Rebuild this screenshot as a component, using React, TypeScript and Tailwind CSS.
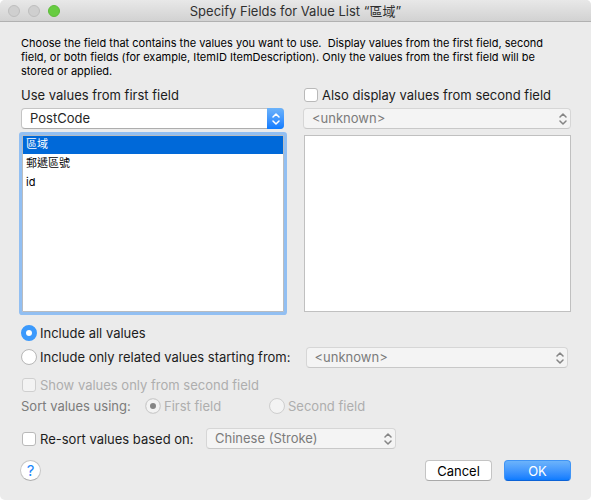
import { useState } from "react";
import clsx from "clsx";

const fieldNames = ["區域", "郵遞區號", "id"];

const controlBase = "m-0 shrink-0 appearance-none border bg-white border-[#b9b9b9] disabled:bg-[#f3f3f3] disabled:border-[#cfcfcf]";
const checkboxClass = clsx(controlBase, "mx-px size-[14px] rounded-[3px] checked:bg-[#3b99fc]");
const radioClass = clsx(
  controlBase,
  "size-4 rounded-full bg-clip-padding",
  "enabled:checked:border-[5px] enabled:checked:border-[#3b99fc]",
  "disabled:checked:bg-[#858585] disabled:checked:shadow-[inset_0_0_0_4px_#f3f3f3]"
);

function Arrows({ className }: { className?: string }) {
  return (
    <svg viewBox="0 0 8 12" className={clsx("h-3 w-2", className)} fill="none" stroke="currentColor" strokeWidth="1.5" strokeLinecap="round" strokeLinejoin="round">
      <path d="M1 4 4 1l3 3M1 8l3 3 3-3" />
    </svg>
  );
}

type PopUpProps = {
  label: string;
  options: string[];
  disabled?: boolean;
  className?: string;
};

function PopUp({ label, options, disabled, className }: PopUpProps) {
  return (
    <div className={clsx("relative h-[21px]", className)}>
      <select
        aria-label={label}
        disabled={disabled}
        className="block h-full w-full appearance-none rounded-[4px] border border-[#c4c4c4] border-b-[#adadad] bg-white pl-2 pr-6 text-[13px] leading-[19px] text-[#262626] outline-none disabled:border-[#d6d6d6] disabled:border-b-[#c8c8c8] disabled:bg-[#f4f4f4] disabled:text-[#7b7b7b] disabled:opacity-100"
      >
        {options.map((option) => (
          <option key={option}>{option}</option>
        ))}
      </select>
      <span
        className={clsx(
          "pointer-events-none absolute inset-y-0 right-0 flex w-[17px] items-center justify-center rounded-r-[4px]",
          disabled ? "text-[#858585]" : "bg-linear-to-b from-[#6cb3fa] to-[#0a7bff] text-white"
        )}
      >
        <Arrows />
      </span>
    </div>
  );
}

export default function App() {
  const [selected, setSelected] = useState("區域");
  const [include, setInclude] = useState("all");
  const [resort, setResort] = useState(false);

  return (
    <div className="min-h-screen bg-white font-[Inter,'Noto_Sans_CJK_TC',sans-serif] text-[13px] leading-4 text-[#1c1c1c]">
      <div className="flex min-h-screen flex-col overflow-hidden rounded-[5px] bg-[#ebebeb]">
        <header className="grid h-[22px] grid-cols-[60px_1fr_60px] items-center border-b border-[#b1b1b1] bg-linear-to-b from-[#e8e8e8] to-[#d2d2d2]">
          <div className="flex gap-2 pl-2">
            <button aria-label="Close" className="size-3 shrink-0 rounded-full border border-[#bdbdbd] bg-[#cfcfcf]" />
            <button aria-label="Minimize" className="size-3 shrink-0 rounded-full border border-[#bdbdbd] bg-[#cfcfcf]" />
            <button aria-label="Zoom" className="size-3 shrink-0 rounded-full border border-[#5cbb39] bg-[#67cc41]" />
          </div>
          <h1 className="text-center text-[#303030]">Specify Fields for Value List “區域”</h1>
        </header>

        <main className="flex flex-col pt-[14px] pr-5 pl-[21px]">
          <p className="pr-5 text-[11px] leading-[14px] text-black">
            Choose the field that contains the values you want to use.&nbsp; Display values from the first field, second
            field, or both fields (for example, ItemID ItemDescription). Only the values from the first field will be
            stored or applied.
          </p>

          <div className="mt-2 grid grid-cols-[263fr_268fr] gap-x-[19px]">
            <section>
              <h2 className="flex h-[18px] items-center">Use values from first field</h2>
              <PopUp label="First field table" options={["PostCode"]} className="mt-1" />
              <ul
                role="listbox"
                aria-label="First field"
                className="mt-[6px] ml-px flex h-[177px] flex-col gap-px rounded-[1px] border border-[#b9bcc0] bg-white text-[11px] text-black ring-3 ring-[#92bff2]"
              >
                {fieldNames.map((name) => (
                  <li
                    key={name}
                    role="option"
                    aria-selected={selected === name}
                    onClick={() => setSelected(name)}
                    className={clsx("flex h-[18px] items-center px-[3px] pb-[2px]", selected === name && "bg-[#0069d9] text-white")}
                  >
                    {name}
                  </li>
                ))}
              </ul>
            </section>

            <section>
              <label className="flex h-[18px] items-center gap-[3px]">
                <input type="checkbox" className={checkboxClass} />
                Also display values from second field
              </label>
              <PopUp label="Second field table" options={["<unknown>"]} disabled className="mt-1" />
              <ul role="listbox" aria-label="Second field" className="mt-[6px] ml-px h-[177px] border border-[#c0c0c0] bg-white" />
            </section>
          </div>

          <label className="mt-3 flex h-[18px] items-center gap-[3px] self-start">
            <input type="radio" name="include" className={radioClass} checked={include === "all"} onChange={() => setInclude("all")} />
            Include all values
          </label>
          <div className="mt-1 flex h-[21px] items-center gap-[15px] pr-[3px]">
            <label className="flex items-center gap-[3px] whitespace-nowrap">
              <input type="radio" name="include" className={radioClass} checked={include === "related"} onChange={() => setInclude("related")} />
              Include only related values starting from:
            </label>
            <PopUp label="Related table" options={["<unknown>"]} disabled className="mt-[2px] flex-1" />
          </div>
          <label className="mt-[9px] flex h-[18px] items-center gap-[3px] self-start text-[#aeaeae]">
            <input type="checkbox" disabled className={checkboxClass} />
            Show values only from second field
          </label>

          <fieldset className="mt-1 flex h-[18px] items-center text-[#aeaeae]">
            <span className="w-[124px] text-[#7b7b7b]">Sort values using:</span>
            <label className="flex w-[124px] items-center gap-[3px]">
              <input type="radio" name="sort" disabled defaultChecked className={radioClass} />
              First field
            </label>
            <label className="flex items-center gap-[3px]">
              <input type="radio" name="sort" disabled className={radioClass} />
              Second field
            </label>
          </fieldset>

          <div className="mt-3 flex h-[21px] items-center">
            <label className="flex w-[185px] items-center gap-[3px] whitespace-nowrap">
              <input type="checkbox" className={checkboxClass} checked={resort} onChange={() => setResort(!resort)} />
              Re-sort values based on:
            </label>
            <PopUp label="Sort language" options={["Chinese (Stroke)"]} disabled={!resort} className="w-[190px]" />
          </div>

          <footer className="mt-[11px] mb-[18px] flex items-center gap-3">
            <button
              aria-label="Help"
              className="-ml-px mr-auto flex size-[21px] items-center justify-center rounded-full border border-[#c6c6c6] border-b-[#adadad] bg-white text-[15px] text-[#1a86fb]"
            >
              ?
            </button>
            <button className="h-[21px] w-[67px] rounded-[4px] border border-[#c4c4c4] border-b-[#a9a9a9] bg-white text-black">Cancel</button>
            <button className="h-[21px] w-[67px] rounded-[4px] border border-[#3f94f5] border-b-[#0b62d6] bg-linear-to-b from-[#6cb3fa] to-[#0a7bff] text-white">OK</button>
          </footer>
        </main>
      </div>
    </div>
  );
}
